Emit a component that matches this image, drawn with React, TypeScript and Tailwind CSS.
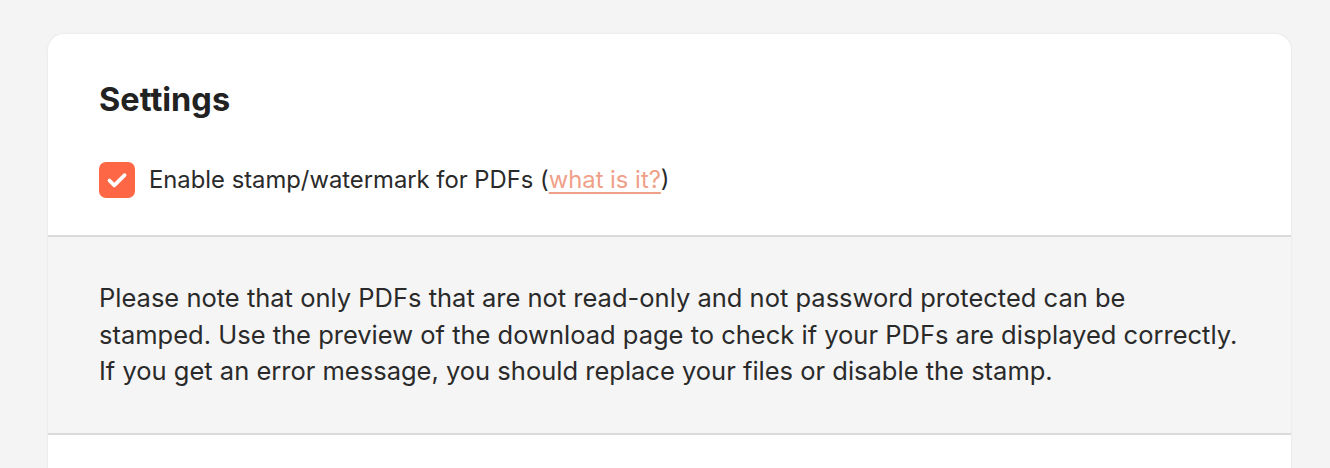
export default function App() {
  return (
    <div
      className="min-h-screen bg-[#f4f4f4] pl-[48px] pr-[39px] pt-[34px] text-[#222222]"
      style={{ fontFamily: "Inter, 'Noto Sans', sans-serif" }}
    >
      <div className="overflow-hidden rounded-t-[16px] bg-white shadow-[0_0_3px_rgba(0,0,0,0.08)]">
        {/* Header */}
        <div className="px-[51px] pt-[46px] pb-[37px]">
          <h2 className="text-[32.5px] font-bold leading-[40px] text-[#222222]">Settings</h2>
          <label className="mt-[42px] flex items-center gap-[14px]">
            <span className="flex h-[36px] w-[36px] shrink-0 items-center justify-center rounded-[7px] bg-[#fd6745]">
              <svg width="26" height="26" viewBox="0 0 24 24" fill="none">
                <path
                  d="M5 12.5l4.5 4.5L19 7.5"
                  stroke="white"
                  strokeWidth="3.4"
                  strokeLinecap="round"
                  strokeLinejoin="round"
                />
              </svg>
            </span>
            <span className="whitespace-nowrap text-[23.8px] leading-[32px] text-[#2a2a2a]">
              Enable stamp/watermark for PDFs (
              <a href="#" className="text-[#f0a088] underline underline-offset-[4px]">
                what is it?
              </a>
              )
            </span>
          </label>
        </div>

        {/* Note */}
        <div className="border-y-2 border-[#dadada] bg-[#f5f5f5] px-[51px] pt-[43px] pb-[43px]">
          <p className="whitespace-nowrap text-[25.5px] leading-[36.5px] text-[#2a2a2a]">
            Please note that only PDFs that are not read-only and not password protected can be
            <br />
            stamped. Use the preview of the download page to check if your PDFs are displayed correctly.
            <br />
            If you get an error message, you should replace your files or disable the stamp.
          </p>
        </div>

        <div className="h-[40px] bg-white" />
      </div>
    </div>
  )
}
